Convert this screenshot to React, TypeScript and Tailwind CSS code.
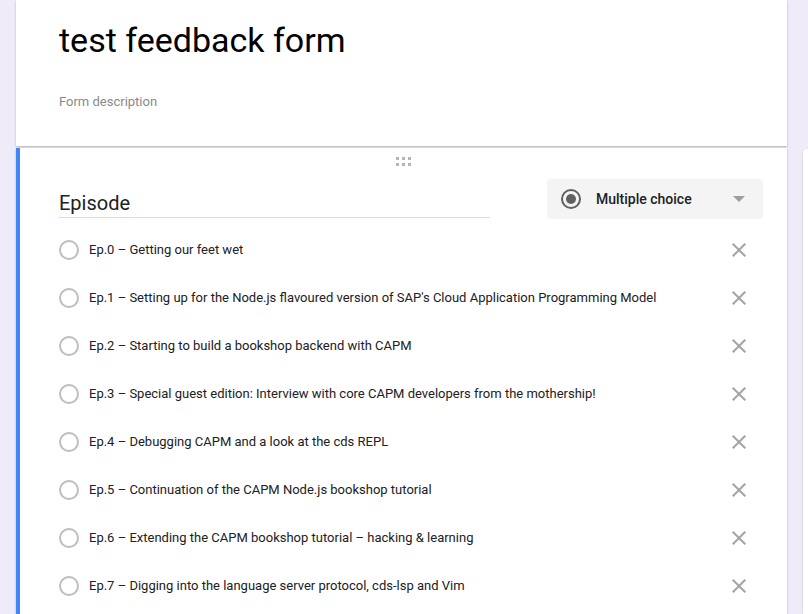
import { ReactNode } from 'react';

const EPISODES = [
  'Ep.0 – Getting our feet wet',
  "Ep.1 – Setting up for the Node.js flavoured version of SAP's Cloud Application Programming Model",
  'Ep.2 – Starting to build a bookshop backend with CAPM',
  'Ep.3 – Special guest edition: Interview with core CAPM developers from the mothership!',
  'Ep.4 – Debugging CAPM and a look at the cds REPL',
  'Ep.5 – Continuation of the CAPM Node.js bookshop tutorial',
  'Ep.6 – Extending the CAPM bookshop tutorial – hacking & learning',
  'Ep.7 – Digging into the language server protocol, cds-lsp and Vim',
];

function CloseIcon() {
  return (
    <svg viewBox="0 0 24 24" className="w-6 h-6 fill-[#a3a3a3]">
      <path d="M19 6.41L17.59 5 12 10.59 6.41 5 5 6.41 10.59 12 5 17.59 6.41 19 12 13.41 17.59 19 19 17.59 13.41 12z" />
    </svg>
  );
}

function DragHandle() {
  return (
    <div className="grid grid-cols-3 gap-[3px]">
      {[0, 1, 2, 3, 4, 5].map((i) => (
        <span key={i} className="w-[3px] h-[3px] bg-[#b5b5b5]" />
      ))}
    </div>
  );
}

function OptionRow({ children }: { children: ReactNode }) {
  return (
    <div className="flex items-center h-12">
      <span className="w-5 h-5 rounded-full border-2 border-[#bdbdbd] flex-shrink-0" />
      <span className="ml-[10px] text-[13px] text-[#202124] flex-1 truncate">{children}</span>
      <button className="w-12 h-12 flex items-center justify-center flex-shrink-0" aria-label="Remove option">
        <CloseIcon />
      </button>
    </div>
  );
}

export default function App() {
  return (
    <div className="min-h-screen bg-[#f0ebf8] flex overflow-hidden font-['Roboto',sans-serif]">
      <div className="ml-4 w-[771px] flex-shrink-0 flex flex-col gap-[2px]">
        {/* form header */}
        <div className="h-[146px] bg-white shadow-[0_1px_2px_rgba(0,0,0,0.25)] pl-[43px] pt-[18px]">
          <h1 className="text-[34px] leading-[44px] text-black">test feedback form</h1>
          <p className="mt-[31px] text-[13px] leading-[18px] text-[#8a8a8a]">Form description</p>
        </div>

        {/* question card */}
        <div className="flex-1 bg-white border-l-4 border-[#4285f4] shadow-[0_1px_2px_rgba(0,0,0,0.25)] pl-[39px] pr-6">
          <div className="h-6 -ml-[39px] -mr-6 flex items-center justify-center pt-[2px]">
            <DragHandle />
          </div>

          <div className="flex items-start mt-[7px]">
            <div className="w-[431px] pt-3 pb-[2px] border-b border-[#dadce0]">
              <div className="text-[20px] leading-6 text-[#202124]">Episode</div>
            </div>
            <div className="ml-auto w-[216px] h-10 rounded bg-[#f4f4f4] flex items-center pl-[14px] pr-[18px]">
              <span className="w-5 h-5 rounded-full border-2 border-[#616161] flex items-center justify-center">
                <span className="w-[10px] h-[10px] rounded-full bg-[#616161]" />
              </span>
              <span className="ml-[15px] text-[14px] font-medium text-[#202124]">Multiple choice</span>
              <span className="ml-auto w-0 h-0 border-l-[6px] border-r-[6px] border-t-[6px] border-l-transparent border-r-transparent border-t-[#9e9e9e]" />
            </div>
          </div>

          <div className="mt-[7px]">
            {EPISODES.map((ep) => (
              <OptionRow key={ep}>{ep}</OptionRow>
            ))}
          </div>
        </div>
      </div>

      {/* floating side toolbar */}
      <div className="ml-4 mt-[149px] w-12 flex-shrink-0 bg-white rounded-tl shadow-[0_1px_2px_rgba(0,0,0,0.25)]" />
    </div>
  );
}
